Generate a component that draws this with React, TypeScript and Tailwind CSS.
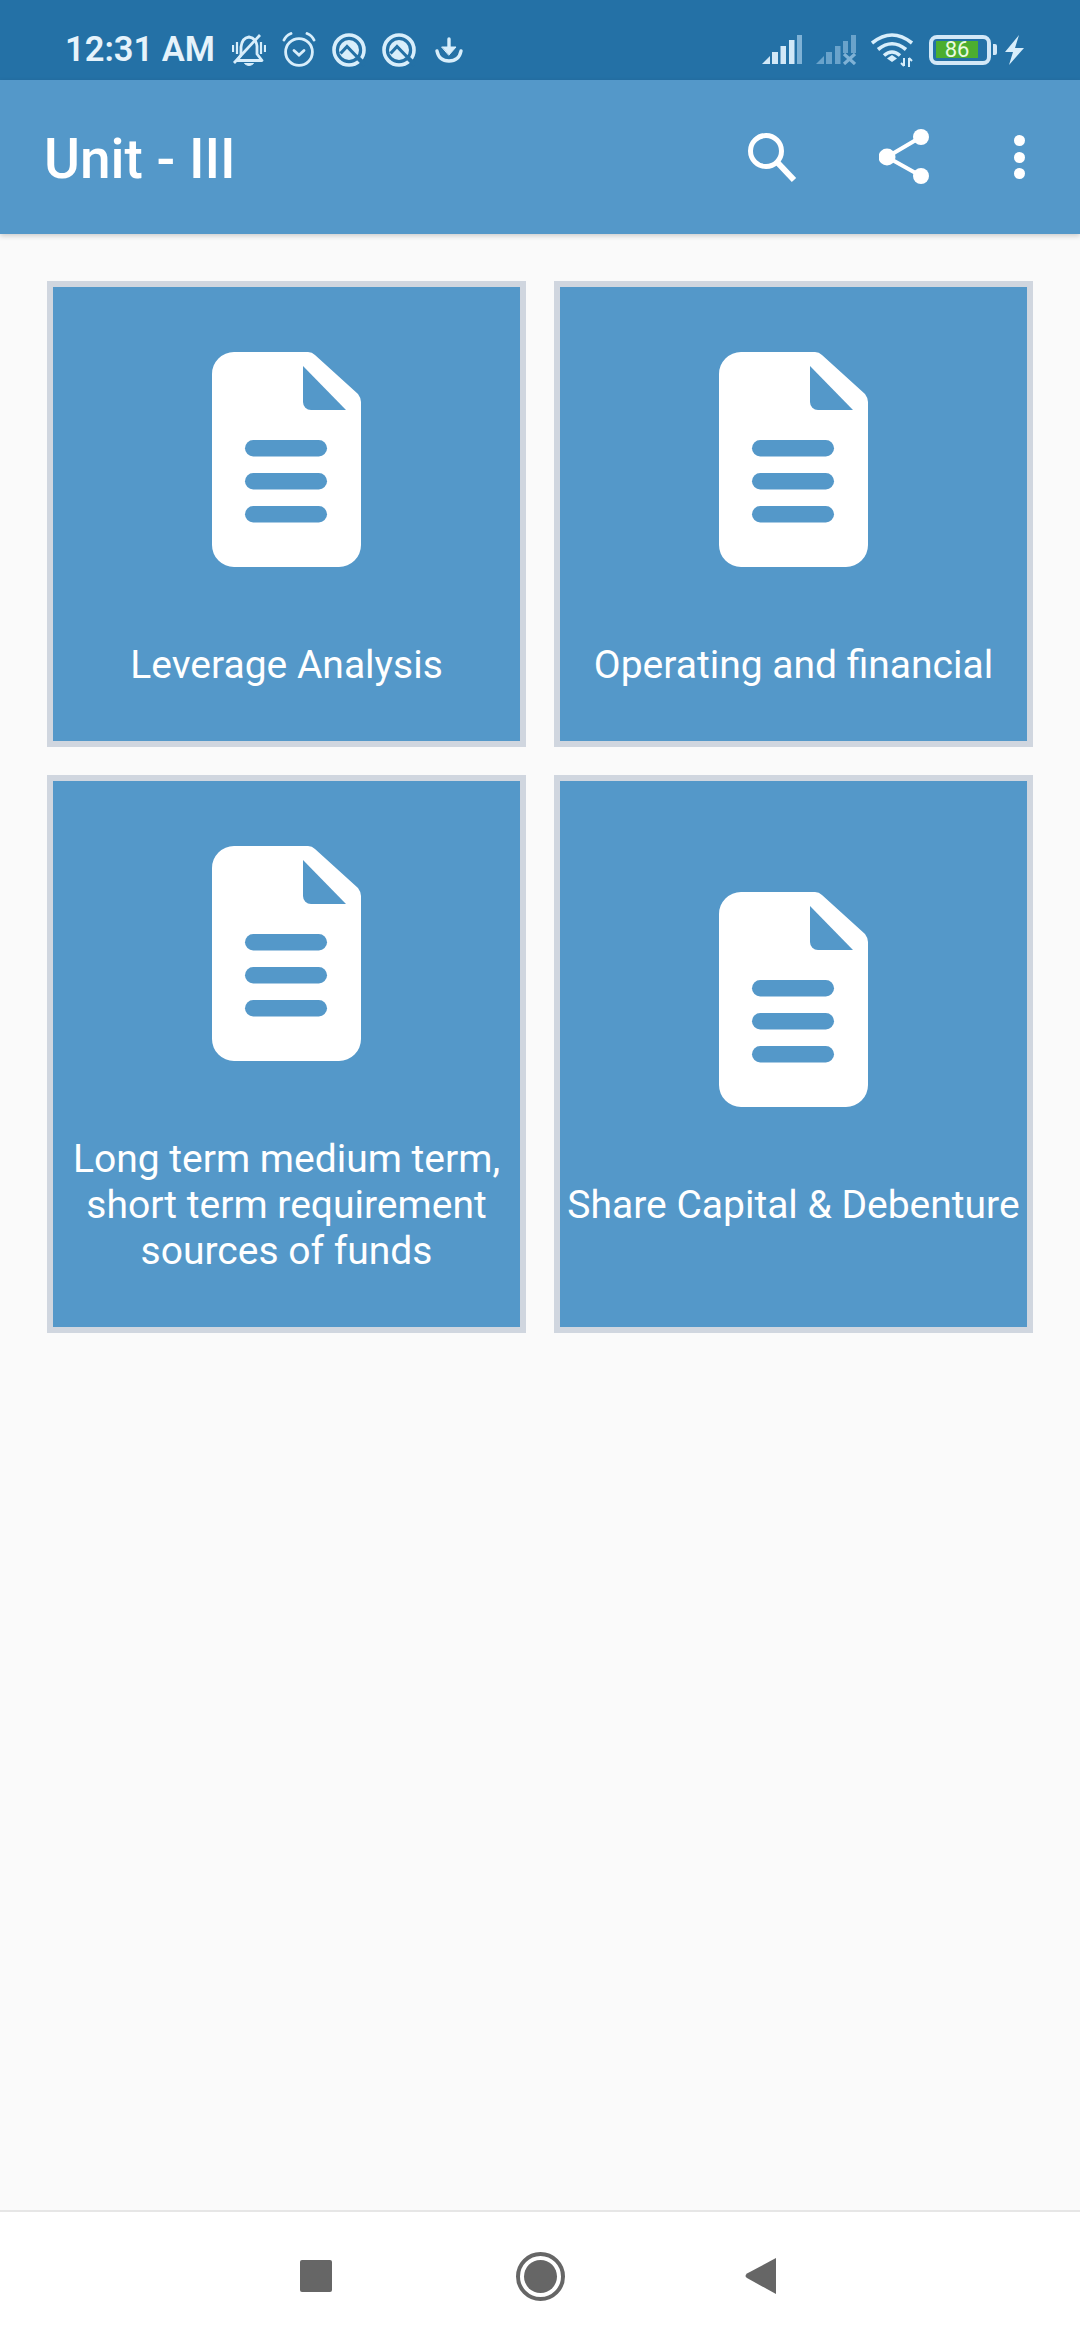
import React from "react";

const ICON = "#d8eefb";

function Bell() {
  return (
    <svg width="34" height="34" viewBox="0 0 34 34" fill="none" stroke={ICON} strokeWidth="2.8">
      <path d="M9 22 V14 Q10 5 17 4 Q24 5 25 13 V21 L30 27.5 H5 L9 22" strokeLinejoin="round" />
      <path d="M12.5 30.5 Q17 34.5 21.5 30.5 Z" fill={ICON} strokeWidth="1" />
      <path d="M2 30 L28 2" />
      <path d="M1 12 V19 M5 9 V21 M29 9 V21 M33 12 V19" strokeWidth="2.2" />
    </svg>
  );
}
function Alarm() {
  return (
    <svg width="34" height="35" viewBox="0 0 34 35" fill="none" stroke={ICON} strokeWidth="2.8" strokeLinecap="round">
      <circle cx="17" cy="20" r="13.4" />
      <path d="M2 8 Q4 3.5 9 1.5 M25 1.5 Q30 3.5 32 8" />
      <path d="M12 18.5 L17 23 L22 18.5" />
    </svg>
  );
}
function Q() {
  return (
    <svg width="34" height="34" viewBox="0 0 34 34" fill="none">
      <circle cx="17" cy="17" r="15" stroke={ICON} strokeWidth="3.6" />
      <circle cx="17" cy="17" r="10" fill={ICON} />
      <path d="M8.5 20.5 L15 13.5 L30 29" stroke="#2471a6" strokeWidth="3.2" />
      <path d="M26 25 L33 32" stroke="#2471a6" strokeWidth="4.5" />
    </svg>
  );
}
function Download() {
  return (
    <svg width="28" height="26" viewBox="0 0 28 26" fill="none" stroke={ICON} strokeWidth="3.4" strokeLinecap="round">
      <path d="M2 14 Q4 24 14 24 Q24 24 26 14" />
      <path d="M14 2 V11" />
      <path d="M7 10 H21 L14 18 Z" fill={ICON} strokeWidth="1" strokeLinejoin="round" />
    </svg>
  );
}
function Signal() {
  return (
    <svg width="40" height="30" viewBox="0 0 40 30">
      <path d="M0 29 L8 21 V29 Z" fill="#d2e8f7" />
      <rect x="10" y="17" width="6" height="12" fill="#d2e8f7" />
      <rect x="18.5" y="11" width="5.5" height="18" fill="#d2e8f7" />
      <rect x="27" y="5" width="5.5" height="24" fill="#d2e8f7" />
      <rect x="35" y="0" width="5" height="29" fill="#7fb2d6" />
    </svg>
  );
}
function SignalOff() {
  return (
    <svg width="40" height="30" viewBox="0 0 40 30">
      <path d="M0 29 L8 21 V29 Z" fill="#6aa3cb" />
      <rect x="10" y="17" width="6" height="12" fill="#6aa3cb" />
      <rect x="19" y="11" width="5.5" height="18" fill="#6aa3cb" />
      <rect x="27" y="6" width="5" height="12" fill="#6aa3cb" />
      <rect x="35" y="0" width="5" height="18" fill="#6aa3cb" />
      <path d="M28 19 L39 29 M39 19 L28 29" stroke="#7fb2d6" strokeWidth="3.2" />
    </svg>
  );
}
function Wifi() {
  return (
    <svg width="43" height="34" viewBox="0 0 43 34" fill="none" stroke={ICON} strokeWidth="3.6">
      <path d="M1 10 Q21 -6 41 10" />
      <path d="M7 16.5 Q21 5 35 16.5" />
      <path d="M13 22.5 Q21 15.5 29 22.5" />
      <path d="M16 25.5 L21 22 L26 25.5 L21 29 Z" fill={ICON} stroke="none" />
      <path d="M33 25 V33 M30 30 L33 33 M38 34 V25 M38 25 L41 28" strokeWidth="2" />
    </svg>
  );
}
function Bolt() {
  return (
    <svg width="19" height="30" viewBox="0 0 19 30">
      <path d="M14 0 L0 17 H8 L4 30 L19 13 H10 Z" fill={ICON} />
    </svg>
  );
}
function DocIcon() {
  return (
    <svg width="149" height="215" viewBox="0 0 149 215">
      <path
        d="M22 0 H96 Q100 0 103 3 L146 42 Q149 46 149 50 V193 A22 22 0 0 1 127 215 H22 A22 22 0 0 1 0 193 V22 A22 22 0 0 1 22 0 Z"
        fill="#fff"
      />
      <path d="M91 14 L134 58 H99 A8 8 0 0 1 91 50 Z" fill="#5498c9" />
      <rect x="33" y="88" width="82" height="16.5" rx="8.25" fill="#5498c9" />
      <rect x="33" y="121" width="82" height="16.5" rx="8.25" fill="#5498c9" />
      <rect x="33" y="154" width="82" height="16.5" rx="8.25" fill="#5498c9" />
    </svg>
  );
}

function Card({ title }: { title: string }) {
  return (
    <div className="flex flex-col items-center justify-center border-[6px] border-[#d0d6df] bg-[#5498c9] pt-[65px] pb-[53px] px-1">
      <DocIcon />
      <div className="mt-[75px] text-center text-[39px] leading-[46px] text-white font-normal">{title}</div>
    </div>
  );
}

export default function App() {
  return (
    <div className="flex flex-col h-[2340px] w-[1080px] bg-[#fafafa] font-['Roboto',sans-serif] overflow-hidden">
      <div className="flex h-20 items-center bg-[#2471a6] pl-[65px] pr-[56px] pt-[19px] shrink-0">
        <span className="w-[167px] text-[34.5px] font-semibold text-[#e6f3fb] leading-none">12:31 AM</span>
        <div className="flex items-center gap-[16px]">
          <Bell />
          <Alarm />
          <Q />
          <Q />
          <div className="ml-[3px]"><Download /></div>
        </div>
        <div className="ml-auto flex items-center">
          <Signal />
          <div className="ml-[14px]"><SignalOff /></div>
          <div className="ml-[15px]"><Wifi /></div>
          <div className="ml-[15px] flex items-center">
            <div className="flex h-[30px] w-[62px] items-center rounded-[8px] border-[4px] border-[#d3e8f7] pl-[3px]">
              <div className="flex h-[17px] w-[42px] items-center justify-center bg-[#4cae2f] text-[22px] leading-none text-[#eafbe0]">86</div>
            </div>
            <div className="ml-[2px] h-[11px] w-[4px] rounded-r-[2px] bg-[#d3e8f7]" />
          </div>
          <div className="ml-[8px]"><Bolt /></div>
        </div>
      </div>

      <div className="relative z-10 flex h-[154px] items-center bg-[#5498c9] pl-[44px] shadow-[0_2px_5px_rgba(0,0,0,0.18)] shrink-0">
        <h1 className="mt-[4px] text-[55px] font-medium leading-none text-white">Unit - III</h1>
        <div className="ml-auto flex items-center">
          <svg width="50" height="52" viewBox="0 0 50 52" fill="none" stroke="#fff" className="mr-[82px]">
            <circle cx="19" cy="20" r="15.5" strokeWidth="5" />
            <path d="M30 31 L47 49" strokeWidth="6" />
          </svg>
          <svg width="50" height="56" viewBox="0 0 50 56" fill="#fff" stroke="none" className="mr-[85px]">
            <circle cx="8" cy="28" r="8.5" />
            <circle cx="42" cy="8" r="8" />
            <circle cx="42" cy="47" r="8" />
            <path d="M8 28 L42 8 M8 28 L42 47" stroke="#fff" strokeWidth="4" />
          </svg>
          <div className="mr-[55px] flex flex-col gap-[5.5px]">
            <div className="h-[11px] w-[11px] rounded-full bg-white" />
            <div className="h-[11px] w-[11px] rounded-full bg-white" />
            <div className="h-[11px] w-[11px] rounded-full bg-white" />
          </div>
        </div>
      </div>

      <div className="flex-1">
        <div className="grid grid-cols-2 gap-x-[28px] gap-y-[28px] pl-[47px] pr-[47px] pt-[47px]">
          <Card title="Leverage Analysis" />
          <Card title="Operating and financial" />
          <Card title="Long term medium term, short term requirement sources of funds" />
          <Card title="Share Capital & Debenture" />
        </div>
      </div>

      <div className="flex h-[130px] items-center border-t-2 border-[#e6e6e6] bg-white pl-[300px] shrink-0">
        <div className="h-8 w-8 rounded-[2px] bg-[#666]" />
        <svg width="49" height="49" viewBox="0 0 49 49" className="ml-[184px]">
          <circle cx="24.5" cy="24.5" r="22.5" fill="none" stroke="#666" strokeWidth="4" />
          <circle cx="24.5" cy="24.5" r="16.5" fill="#666" />
        </svg>
        <svg width="32" height="36" viewBox="0 0 32 36" className="ml-[180px]">
          <path d="M2 15.5 L31 0 V36 L2 20 Q-1 18 2 15.5 Z" fill="#666" />
        </svg>
      </div>
    </div>
  );
}
